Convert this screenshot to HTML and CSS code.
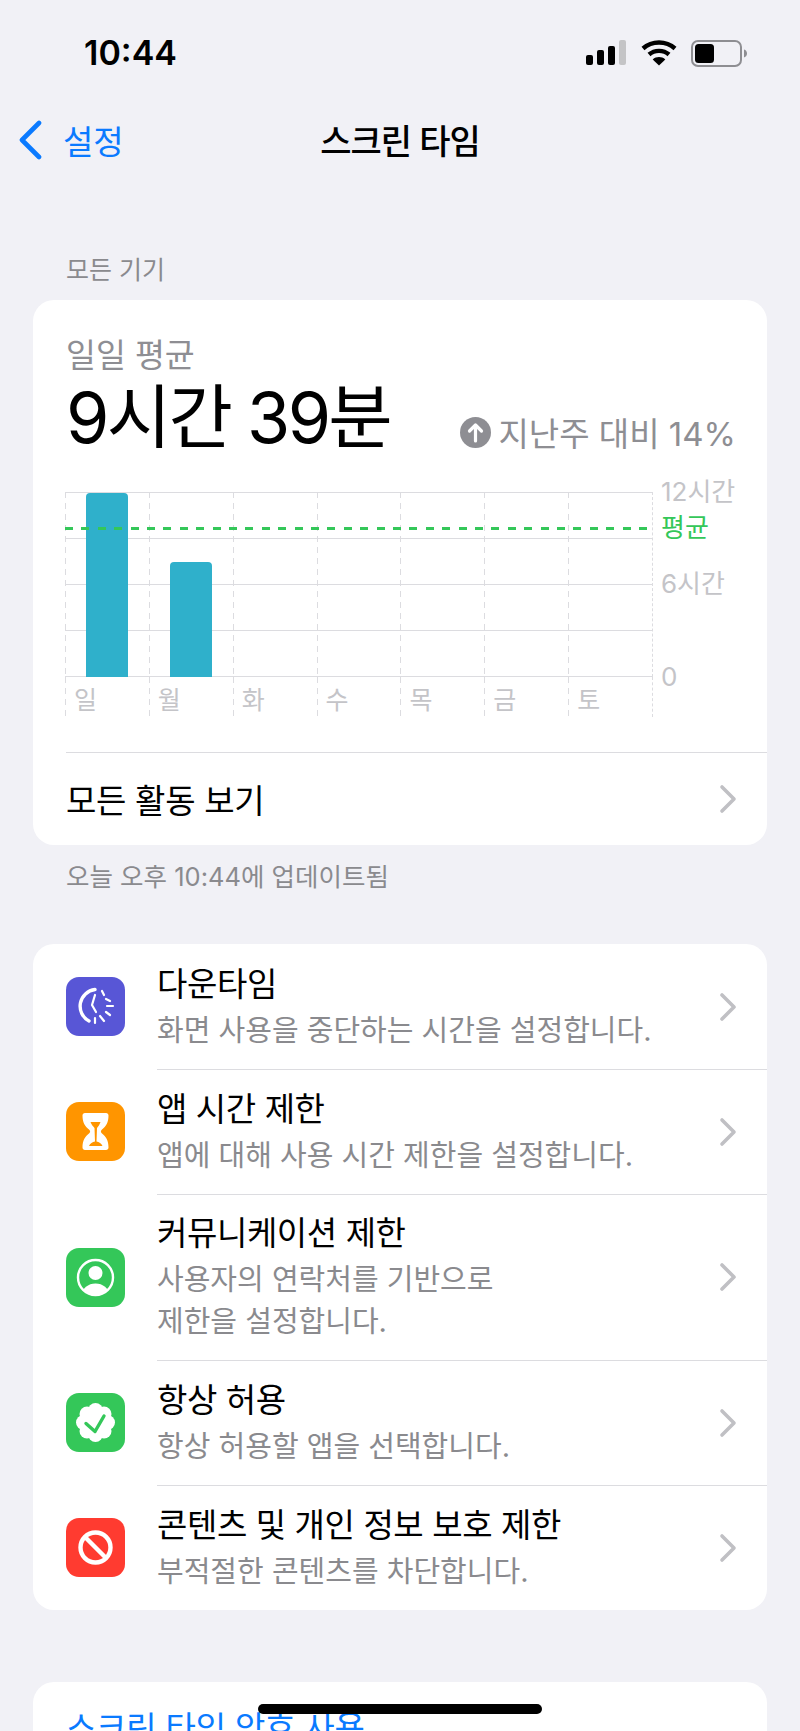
FILE: index.html
```html
<!DOCTYPE html>
<html lang="ko">
<head>
  <meta charset="UTF-8" />
  <meta name="viewport" content="width=device-width, initial-scale=1.0"/>
  <title>스크린 타임</title>
  <link rel="stylesheet" href="styles.css">
</head>
<body>
  <div class="screen">
    <div class="status">
      <span class="clock">10:44</span>
      <div class="status-icons">
        <svg class="signal" width="42" height="26" viewBox="0 0 42 26">
          <rect x="1" y="15" width="7" height="10" rx="2" fill="#000"/>
          <rect x="12" y="10" width="7" height="15" rx="2" fill="#000"/>
          <rect x="23" y="6" width="7" height="19" rx="2" fill="#000"/>
          <rect x="34" y="0" width="7" height="25" rx="2" fill="#c4c4c6"/>
        </svg>
        <svg class="wifi" width="36" height="26" viewBox="0 0 36 26">
          <path d="M2 8.500C11 .5 25 .5 34 8.500" fill="none" stroke="#000" stroke-width="4.400" stroke-linecap="butt"/>
          <path d="M8 14.500C13.500 9.600 22.500 9.600 28 14.500" fill="none" stroke="#000" stroke-width="4.400"/>
          <path d="M18 25.500 11.700 19.400C15.300 16.200 20.700 16.200 24.300 19.400Z" fill="#000"/>
        </svg>
        <svg class="battery" width="56" height="27" viewBox="0 0 56 27">
          <rect x="1" y="1" width="49" height="25" rx="6" fill="none" stroke="#8e8e92" stroke-width="2"/>
          <rect x="4" y="4" width="19" height="19" rx="3.500" fill="#000"/>
          <path d="M53 9.500c2 .6 3 2.200 3 4s-1 3.400-3 4z" fill="#8e8e92"/>
        </svg>
      </div>
    </div>

    <div class="navbar">
      <div class="back">
        <svg width="26" height="40" viewBox="0 0 26 40">
          <path d="M22 3 5 20l17 17" fill="none" stroke="#0a7aff" stroke-width="4.600" stroke-linecap="round" stroke-linejoin="round"/>
        </svg>
        <span>설정</span>
      </div>
      <div class="nav-title">스크린 타임</div>
    </div>

    <div class="section-label">모든 기기</div>

    <div class="card">
      <div class="summary">
        <div class="summary-label">일일 평균</div>
        <div class="summary-main">
          <span class="big-time">9시간 39분</span>
          <span class="delta">
            <svg width="31" height="31" viewBox="0 0 31 31">
              <circle cx="15.500" cy="15.500" r="15.500" fill="#8e8e93"/>
              <path d="M15.500 24V8.500M9.500 14l6-6 6 6" fill="none" stroke="#fff" stroke-width="3.200" stroke-linecap="round" stroke-linejoin="round"/>
            </svg>
            <span>지난주 대비 14%</span>
          </span>
        </div>
      </div>

      <div class="chart">
        <div class="plot">
          <div class="hlines"><i></i><i></i><i></i><i></i></div>
          <div class="days">
            <div class="day"><div class="bar" style="height: 184px"></div></div>
            <div class="day"><div class="bar" style="height: 115px"></div></div>
            <div class="day"></div>
            <div class="day"></div>
            <div class="day"></div>
            <div class="day"></div>
            <div class="day"></div>
          </div>
          <div class="avg-line"></div>
          <div class="axis">
            <span style="top: 0">12시간</span>
            <span class="axis-avg" style="top: 36px">평균</span>
            <span style="top: 92px">6시간</span>
            <span style="top: 185px">0</span>
          </div>
        </div>
        <div class="labels">
          <span>일</span><span>월</span><span>화</span><span>수</span><span>목</span><span>금</span><span>토</span>
        </div>
      </div>

      <div class="see-all">
        <span>모든 활동 보기</span>
        <svg class="chevron" width="18" height="30" viewBox="0 0 18 30"><path d="M3 3l12 12L3 27" fill="none" stroke="#c0c0c4" stroke-width="3.600" stroke-linecap="round" stroke-linejoin="round"/></svg>
      </div>
    </div>

    <div class="section-foot">오늘 오후 10:44에 업데이트됨</div>

    <div class="card list">
      <div class="row">
        <div class="icon icon-indigo">
          <svg width="59" height="59" viewBox="0 0 59 59">
            <path d="M29 12.500A16.800 16.800 0 0 0 23 44" fill="none" stroke="#fff" stroke-width="3.400" stroke-linecap="round"/>
            <path d="M29 18l-3 10 4 7" fill="none" stroke="#fff" stroke-width="2.200" stroke-linecap="round" stroke-linejoin="round"/>
            <path d="M36 14l2 4M40 22l4 2M41 29h6M40 35l4 3M34 39l4 5M29 41v5" fill="none" stroke="#fff" stroke-width="2.200" stroke-linecap="round"/>
          </svg>
        </div>
        <div class="row-text">
          <div class="row-title">다운타임</div>
          <div class="row-sub">화면 사용을 중단하는 시간을 설정합니다.</div>
        </div>
        <svg class="chevron" width="18" height="30" viewBox="0 0 18 30"><path d="M3 3l12 12L3 27" fill="none" stroke="#c0c0c4" stroke-width="3.600" stroke-linecap="round" stroke-linejoin="round"/></svg>
      </div>
      <div class="row">
        <div class="icon icon-orange">
          <svg width="59" height="59" viewBox="0 0 59 59">
            <path d="M19 11h21c1.500 0 2.500 1 2.500 2.500 0 7-2.500 11-6.500 14-1.500 1-1.500 3 0 4 4 3 6.500 7 6.500 14 0 1.500-1 2.500-2.500 2.500H19c-1.500 0-2.500-1-2.500-2.500 0-7 2.500-11 6.500-14 1.500-1 1.500-3 0-4-4-3-6.500-7-6.500-14 0-1.500 1-2.500 2.500-2.500z" fill="#fff"/>
            <path d="M24.500 20h10c-.8 2.500-2.300 4.500-3.500 6l-.5 13.500c2.500.5 5 2 6 4.500H23c1-2.500 3.500-4 6-4.500L28.500 26c-1.200-1.500-3.200-3.500-4-6z" fill="#ff9500"/>
          </svg>
        </div>
        <div class="row-text">
          <div class="row-title">앱 시간 제한</div>
          <div class="row-sub">앱에 대해 사용 시간 제한을 설정합니다.</div>
        </div>
        <svg class="chevron" width="18" height="30" viewBox="0 0 18 30"><path d="M3 3l12 12L3 27" fill="none" stroke="#c0c0c4" stroke-width="3.600" stroke-linecap="round" stroke-linejoin="round"/></svg>
      </div>
      <div class="row row-tall">
        <div class="icon icon-green">
          <svg width="59" height="59" viewBox="0 0 59 59">
            <defs><clipPath id="ring"><circle cx="29.500" cy="29.500" r="17"/></clipPath></defs>
            <circle cx="29.500" cy="29.500" r="17.500" fill="none" stroke="#fff" stroke-width="2.400"/>
            <circle cx="29.500" cy="25" r="7" fill="#fff"/>
            <ellipse cx="29.500" cy="47" rx="13.500" ry="11.500" fill="#fff" clip-path="url(#ring)"/>
          </svg>
        </div>
        <div class="row-text">
          <div class="row-title">커뮤니케이션 제한</div>
          <div class="row-sub">사용자의 연락처를 기반으로<br>제한을 설정합니다.</div>
        </div>
        <svg class="chevron" width="18" height="30" viewBox="0 0 18 30"><path d="M3 3l12 12L3 27" fill="none" stroke="#c0c0c4" stroke-width="3.600" stroke-linecap="round" stroke-linejoin="round"/></svg>
      </div>
      <div class="row">
        <div class="icon icon-green">
          <svg width="59" height="59" viewBox="0 0 59 59">
            <g fill="#fff">
              <circle cx="29.500" cy="29.500" r="13"/>
              <circle cx="29.500" cy="17.500" r="7.500"/>
              <circle cx="38" cy="21" r="7.500"/>
              <circle cx="41.500" cy="29.500" r="7.500"/>
              <circle cx="38" cy="38" r="7.500"/>
              <circle cx="29.500" cy="41.500" r="7.500"/>
              <circle cx="21" cy="38" r="7.500"/>
              <circle cx="17.500" cy="29.500" r="7.500"/>
              <circle cx="21" cy="21" r="7.500"/>
            </g>
            <path d="M20 30.500l9 8 9-15.500" fill="none" stroke="#34c759" stroke-width="3.400" stroke-linecap="round" stroke-linejoin="round"/>
          </svg>
        </div>
        <div class="row-text">
          <div class="row-title">항상 허용</div>
          <div class="row-sub">항상 허용할 앱을 선택합니다.</div>
        </div>
        <svg class="chevron" width="18" height="30" viewBox="0 0 18 30"><path d="M3 3l12 12L3 27" fill="none" stroke="#c0c0c4" stroke-width="3.600" stroke-linecap="round" stroke-linejoin="round"/></svg>
      </div>
      <div class="row">
        <div class="icon icon-red">
          <svg width="59" height="59" viewBox="0 0 59 59">
            <circle cx="29.500" cy="29.500" r="15" fill="none" stroke="#fff" stroke-width="4.400"/>
            <path d="M19 19l21 21" stroke="#fff" stroke-width="4.400"/>
          </svg>
        </div>
        <div class="row-text">
          <div class="row-title">콘텐츠 및 개인 정보 보호 제한</div>
          <div class="row-sub">부적절한 콘텐츠를 차단합니다.</div>
        </div>
        <svg class="chevron" width="18" height="30" viewBox="0 0 18 30"><path d="M3 3l12 12L3 27" fill="none" stroke="#c0c0c4" stroke-width="3.600" stroke-linecap="round" stroke-linejoin="round"/></svg>
      </div>
    </div>

    <div class="card last">
      <div class="link">스크린 타임 암호 사용</div>
    </div>

    <div class="home-bar"></div>
  </div>
</body>
</html>
```

FILE: styles.css
```css
* {
  box-sizing: border-box;
}
html, body {
  margin: 0;
  padding: 0;
}
body {
  font-family: Inter, "Noto Sans CJK KR", sans-serif;
  background: #f1f1f6;
  color: #000;
}
.screen {
  position: relative;
  width: 800px;
  height: 1731px;
  overflow: hidden;
}

.status {
  height: 108px;
  padding: 33px 0 0 84px;
  display: flex;
  justify-content: space-between;
}
.clock {
  font-size: 34px;
  font-weight: 600;
  line-height: 40px;
}
.status-icons {
  display: flex;
  align-items: flex-start;
  padding: 7px 53px 0 0;
  gap: 14px;
}

.navbar {
  position: relative;
  height: 64px;
  display: flex;
  align-items: center;
  justify-content: center;
}
.back {
  position: absolute;
  left: 17px;
  top: 8px;
  display: flex;
  align-items: center;
  gap: 20px;
  color: #0a7aff;
  font-size: 33px;
}
.nav-title {
  margin-top: -2px;
  font-size: 34px;
  font-weight: 500;
  letter-spacing: -1px;
}

.section-label {
  margin: 80px 0 12px 66px;
  font-size: 25px;
  line-height: 36px;
  color: #8a8a8e;
}

.card {
  margin: 0 33px;
  background: #fff;
  border-radius: 21px;
}
.summary {
  padding: 36px 31px 0 33px;
}
.summary-label {
  font-size: 32.5px;
  line-height: 40px;
  color: #8e8e93;
}
.summary-main {
  margin-top: -2px;
  display: flex;
  justify-content: space-between;
  align-items: flex-end;
}
.big-time {
  font-size: 70px;
  line-height: 88px;
  letter-spacing: -2.7px;
}
.delta {
  display: flex;
  align-items: center;
  gap: 7px;
  font-size: 33px;
  color: #8e8e93;
  padding-bottom: 6px;
}

.chart {
  margin: 30px 0 0 32px;
}
.plot {
  position: relative;
  width: 588px;
  height: 185px;
}
.hlines {
  position: absolute;
  inset: 0;
  display: flex;
  flex-direction: column;
  border-top: 1px solid #dcdce0;
}
.hlines i {
  flex: 1;
  border-bottom: 1px solid #dcdce0;
}
.days {
  position: absolute;
  inset: 0;
  display: grid;
  grid-template-columns: repeat(7, 1fr);
}
.day,
.labels span {
  background: repeating-linear-gradient(to bottom, #dcdce0 0 6px, transparent 6px 11px) left top / 1px 100% no-repeat;
}
.days,
.labels {
  border-right: 1px dashed #dcdce0;
}
.day {
  display: flex;
  align-items: flex-end;
  justify-content: center;
}
.bar {
  width: 42px;
  background: #2fb0cb;
  border-radius: 4px 4px 0 0;
}
.avg-line {
  position: absolute;
  left: 0;
  right: 0;
  top: 35px;
  height: 3px;
  background: repeating-linear-gradient(to right, #34c759 0 8px, transparent 8px 16.4px);
}
.axis span {
  position: absolute;
  left: 596px;
  font-size: 26px;
  line-height: 30px;
  white-space: nowrap;
  color: #c4c4c8;
  transform: translateY(-15px);
}
.axis .axis-avg {
  color: #34c759;
}
.labels {
  width: 588px;
  height: 40px;
  display: grid;
  grid-template-columns: repeat(7, 1fr);
}
.labels span {
  padding: 8px 0 0 9px;
  font-size: 25px;
  line-height: 30px;
  color: #c4c4c8;
}

.see-all {
  margin: 35px 0 0 33px;
  height: 93px;
  padding-right: 30px;
  display: flex;
  align-items: center;
  justify-content: space-between;
  border-top: 1px solid #dcdce0;
  font-size: 33px;
  letter-spacing: -0.3px;
}
.chevron {
  flex: none;
}

.section-foot {
  margin: 14px 0 0 66px;
  font-size: 25.5px;
  line-height: 36px;
  color: #8a8a8e;
}

.list {
  margin-top: 49px;
  display: flex;
  flex-direction: column;
}
.row {
  height: 125px;
  position: relative;
  display: flex;
  align-items: center;
  padding: 0 30px 0 33px;
}
.row-tall {
  height: 166px;
}
.row + .row::before {
  content: "";
  position: absolute;
  left: 124px;
  right: 0;
  top: 0;
  border-top: 1px solid #dcdce0;
}
.icon {
  flex: none;
  width: 59px;
  height: 59px;
  border-radius: 13px;
  display: flex;
}
.icon-indigo { background: #5856d6; }
.icon-orange { background: #ff9500; }
.icon-green { background: #34c759; }
.icon-red { background: #ff3b30; }
.row-text {
  flex: 1;
  margin-left: 32px;
}
.row-title {
  font-size: 33px;
  line-height: 44px;
  letter-spacing: -0.4px;
}
.row-sub {
  margin-top: 4px;
  font-size: 29px;
  line-height: 42px;
  color: #8a8a8e;
}

.last {
  margin-top: 72px;
  height: 120px;
  padding: 20px 33px;
}
.link {
  font-size: 33px;
  letter-spacing: -0.2px;
  color: #0a7aff;
}
.home-bar {
  position: absolute;
  left: 258px;
  top: 1704px;
  width: 284px;
  height: 10px;
  border-radius: 5px;
  background: #000;
}
```
